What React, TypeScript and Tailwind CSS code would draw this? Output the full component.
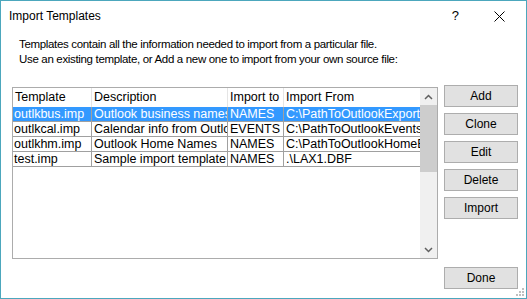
import React from 'react'

const font = { fontFamily: '"Liberation Sans", Arial, sans-serif' }

const rows = [
  { file: 'outlkbus.imp', desc: 'Outlook business names', to: 'NAMES', from: 'C:\\PathToOutlookExportFile.csv' },
  { file: 'outlkcal.imp', desc: 'Calendar info from Outlook', to: 'EVENTS', from: 'C:\\PathToOutlookEvents.csv' },
  { file: 'outlkhm.imp', desc: 'Outlook Home Names', to: 'NAMES', from: 'C:\\PathToOutlookHomeExport.csv' },
  { file: 'test.imp', desc: 'Sample import template', to: 'NAMES', from: '.\\LAX1.DBF' },
]

function Btn({ label }: { label: string }) {
  return (
    <button className="w-[74px] h-[22px] bg-[#e1e1e1] border border-[#adadad] text-[12px] text-black flex items-center justify-center">
      {label}
    </button>
  )
}

export default function App() {
  return (
    <div style={font} className="relative w-[527px] h-[299px] bg-white border border-[#4ca7bd] flex flex-col text-black select-none">
      {/* Title bar */}
      <div className="h-[30px] flex items-center pl-[8px] text-[12px]">
        <span>Import Templates</span>
        <span className="ml-auto mr-[35px] text-[13px]">?</span>
        <svg width="11" height="11" viewBox="0 0 11 11" className="mr-[21px]">
          <path d="M0.5 0.5L10.5 10.5M10.5 0.5L0.5 10.5" stroke="#000" strokeWidth="1" />
        </svg>
      </div>

      {/* Description */}
      <div className="mt-[6px] pl-[18px] text-[11.5px] leading-[15px] tracking-[-0.33px]">
        <div>Templates contain all the information needed to import from a particular file.</div>
        <div>Use an existing template, or Add a new one to import from your own source file:</div>
      </div>

      <div className="flex mt-[18px]">
        {/* List */}
        <div className="ml-[11px] mt-[2px] w-[426px] h-[172px] border border-[#acacac] flex text-[12.5px]">
          <div className="w-[407px] flex flex-col">
            <div className="h-[19px] flex items-center">
              <div className="w-[79px] h-full pl-[2px] flex items-center border-r border-[#e5e5e5]">Template</div>
              <div className="w-[136px] h-full pl-[2px] flex items-center border-r border-[#e5e5e5]">Description</div>
              <div className="w-[56px] h-full pl-[2px] flex items-center border-r border-[#e5e5e5] whitespace-nowrap overflow-hidden">Import to</div>
              <div className="w-[136px] h-full pl-[2px] flex items-center">Import From</div>
            </div>
            {rows.map((r, i) => (
              <div
                key={r.file}
                className={`h-[15px] flex border-b border-[#a0a0a0] whitespace-nowrap overflow-hidden leading-[14px] ${i === 0 ? 'bg-[#3399ff] text-white' : ''}`}
              >
                <div className="w-[79px] pl-[1px] border-r border-[#a0a0a0] overflow-hidden">{r.file}</div>
                <div className="w-[136px] pl-[2px] border-r border-[#a0a0a0] overflow-hidden">{r.desc}</div>
                <div className="w-[56px] pl-[2px] border-r border-[#a0a0a0] overflow-hidden">{r.to}</div>
                <div className="w-[136px] pl-[2px] overflow-hidden">{r.from}</div>
              </div>
            ))}
          </div>
          {/* Scrollbar */}
          <div className="w-[17px] h-full bg-[#f0f0f0] flex flex-col">
            <div className="h-[17px] flex items-center justify-center">
              <svg width="9" height="6" viewBox="0 0 9 6">
                <path d="M1 5L4.5 1.5L8 5" stroke="#606060" strokeWidth="1.5" fill="none" />
              </svg>
            </div>
            <div className="h-[67px] bg-[#cdcdcd]" />
            <div className="flex-1" />
            <div className="h-[17px] flex items-center justify-center">
              <svg width="9" height="6" viewBox="0 0 9 6">
                <path d="M1 1L4.5 4.5L8 1" stroke="#606060" strokeWidth="1.5" fill="none" />
              </svg>
            </div>
          </div>
        </div>

        {/* Buttons */}
        <div className="ml-[6px] flex flex-col gap-[6px]">
          <Btn label="Add" />
          <Btn label="Clone" />
          <Btn label="Edit" />
          <Btn label="Delete" />
          <Btn label="Import" />
        </div>
      </div>

      <div className="mt-[8px] pl-[443px]">
        <Btn label="Done" />
      </div>

      {/* Resize grip */}
      <svg width="9" height="9" viewBox="0 0 9 9" className="absolute right-[1px] bottom-[1px]">
        <rect x="6" y="0" width="2" height="2" fill="#bfbfbf" />
        <rect x="3" y="3" width="2" height="2" fill="#bfbfbf" />
        <rect x="6" y="3" width="2" height="2" fill="#bfbfbf" />
        <rect x="0" y="6" width="2" height="2" fill="#bfbfbf" />
        <rect x="3" y="6" width="2" height="2" fill="#bfbfbf" />
        <rect x="6" y="6" width="2" height="2" fill="#bfbfbf" />
      </svg>
    </div>
  )
}
